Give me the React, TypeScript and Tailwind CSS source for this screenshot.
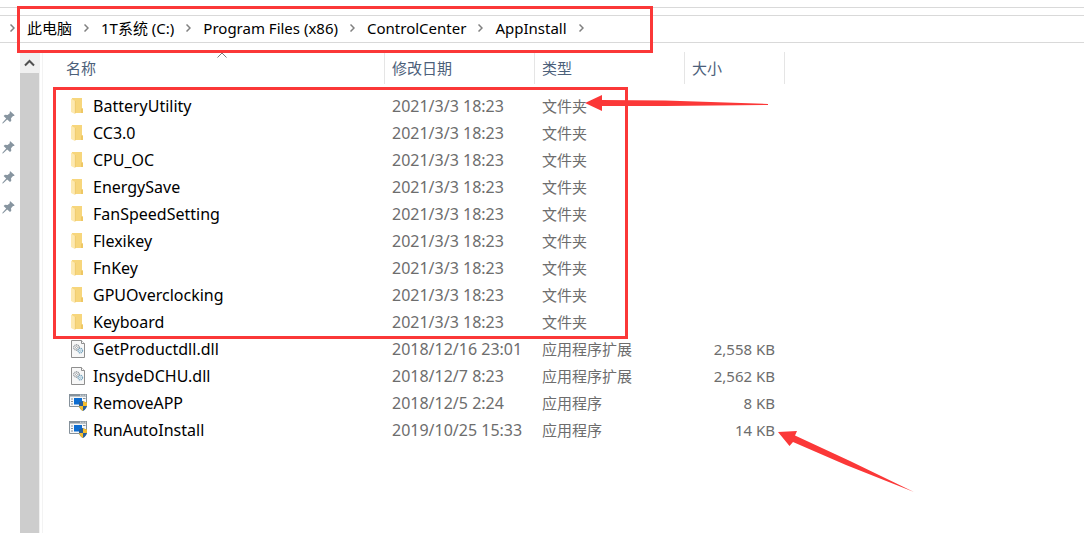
import React from 'react';

type Kind = 'folder' | 'dll' | 'app';

interface Entry {
  name: string;
  date: string;
  kind: Kind;
  size?: string;
}

const crumbs = ['此电脑', '1T系统 (C:)', 'Program Files (x86)', 'ControlCenter', 'AppInstall'];

const typeLabels: Record<Kind, string> = {
  folder: '文件夹',
  dll: '应用程序扩展',
  app: '应用程序',
};

const entries: Entry[] = [
  { name: 'BatteryUtility', date: '2021/3/3 18:23', kind: 'folder' },
  { name: 'CC3.0', date: '2021/3/3 18:23', kind: 'folder' },
  { name: 'CPU_OC', date: '2021/3/3 18:23', kind: 'folder' },
  { name: 'EnergySave', date: '2021/3/3 18:23', kind: 'folder' },
  { name: 'FanSpeedSetting', date: '2021/3/3 18:23', kind: 'folder' },
  { name: 'Flexikey', date: '2021/3/3 18:23', kind: 'folder' },
  { name: 'FnKey', date: '2021/3/3 18:23', kind: 'folder' },
  { name: 'GPUOverclocking', date: '2021/3/3 18:23', kind: 'folder' },
  { name: 'Keyboard', date: '2021/3/3 18:23', kind: 'folder' },
  { name: 'GetProductdll.dll', date: '2018/12/16 23:01', kind: 'dll', size: '2,558 KB' },
  { name: 'InsydeDCHU.dll', date: '2018/12/7 8:23', kind: 'dll', size: '2,562 KB' },
  { name: 'RemoveAPP', date: '2018/12/5 2:24', kind: 'app', size: '8 KB' },
  { name: 'RunAutoInstall', date: '2019/10/25 15:33', kind: 'app', size: '14 KB' },
];

const pins = [1, 2, 3, 4];

const FolderIcon: React.FC = () => (
  <svg width="14" height="16" viewBox="0 0 14 16" aria-hidden="true">
    <path d="M1 0h10v10.500h1V15H4L1 14z" fill="#f7d67c" />
    <path d="M10 10.500h2V15h-2z" fill="#eec764" />
    <path d="M0 0.500L4 3V16L0 14z" fill="#fde9b0" />
    <path d="M4.300 3V15.500" stroke="#e8c468" strokeWidth="0.6" />
  </svg>
);

const DllIcon: React.FC = () => (
  <svg width="14" height="18" viewBox="0 0 14 18" aria-hidden="true">
    <path d="M0.5 0.5h10l3 3v14h-13z" fill="#f7f7f7" stroke="#8f8f8f" />
    <path d="M10.5 0.5v3h3" fill="#fff" stroke="#8f8f8f" />
    <circle cx="5.5" cy="7.5" r="2.7" fill="#fff" stroke="#858b91" strokeWidth="1.2" strokeDasharray="1.2 0.5" />
    <circle cx="5.5" cy="7.5" r="1" fill="none" stroke="#858b91" strokeWidth="0.7" />
    <circle cx="9.3" cy="10.6" r="2.3" fill="#f4fafd" stroke="#79a5be" strokeWidth="1.2" strokeDasharray="1.2 0.5" />
    <circle cx="9.3" cy="10.6" r="0.8" fill="none" stroke="#79a5be" strokeWidth="0.6" />
  </svg>
);

const AppIcon: React.FC = () => (
  <svg width="18" height="17" viewBox="0 0 18 17" aria-hidden="true">
    <path d="M0.5 0.5h17v12h-17z" fill="#f6f7f8" stroke="#85919b" />
    <path d="M0 0h18v2.5H0z" fill="#85919b" />
    <path d="M11 1.200h1.500M13.300 1.200h1.500M15.600 1.200h1.500" stroke="#fff" strokeWidth="0.8" />
    <path d="M2 5h2M2 7.500h2M2 10h2M14 4.500h2.500" stroke="#85919b" />
    <path d="M5 4h8v6.500H5z" fill="#0c6cd0" />
    <path d="M14 7c-1.200 1-2.600 1.300-4 1.300V11c0 2.800 1.600 4.700 4 6 2.400-1.300 4-3.200 4-6V8.300c-1.400 0-2.800-.3-4-1.300z" fill="#2a5e97" />
    <path d="M14 7v5h-3.900c-.1-.3-.1-.7-.1-1V8.300c1.400 0 2.800-.3 4-1.300z" fill="#2a5e97" />
    <path d="M14 7c1.200 1 2.600 1.300 4 1.300V11l-.1 1H14z" fill="#f5bd2d" />
    <path d="M14 17c-2.300-1.300-3.600-2.900-3.900-5H14z" fill="#f5bd2d" />
  </svg>
);

const PinIcon: React.FC = () => (
  <svg width="13" height="13" viewBox="0 0 13 13" aria-hidden="true">
    <path
      d="M8.300 0.300L12.700 4.300L11.800 5.100L11 4.900L9 7.300L9.300 9.800L8 11.100L5.200 8.600L1.200 12.200L0.200 12.600L0.600 11.600L4.200 7.600L1.600 5L3 3.800L5.600 4L8 2.100L7.500 1.100Z"
      fill="#8795a0"
    />
  </svg>
);

const Chevron: React.FC = () => (
  <svg width="5" height="8" viewBox="0 0 5 8" className="shrink-0" aria-hidden="true">
    <path d="M0.500 0.500L4 4L0.500 7.500" fill="none" stroke="#808080" strokeWidth="1.500" />
  </svg>
);

const icons: Record<Kind, React.FC> = { folder: FolderIcon, dll: DllIcon, app: AppIcon };

const AddressBar: React.FC = () => (
  <header className="pt-[7px]">
    <div className="h-[9px] border-y border-[#d9d9d9]"></div>
    <nav aria-label="路径" className="flex h-[27px] items-center gap-3 border-b border-[#d9d9d9] pb-[2px] pl-[10px] text-black">
      <Chevron />
      {crumbs.map((crumb) => (
        <React.Fragment key={crumb}>
          <a href="#" className="whitespace-nowrap">
            {crumb}
          </a>
          <Chevron />
        </React.Fragment>
      ))}
    </nav>
  </header>
);

const Sidebar: React.FC = () => (
  <aside className="flex shrink-0">
    <div className="flex w-5 flex-col pt-[50px] pl-[2px]">
      {pins.map((pin) => (
        <button key={pin} type="button" aria-label="取消固定" className="flex h-[30px] items-center">
          <PinIcon />
        </button>
      ))}
    </div>
    {/* Scrollbar */}
    <div className="flex w-5 flex-col bg-[#f0f0f0]">
      <button type="button" aria-label="向上滚动" className="flex h-[21px] items-center justify-center">
        <svg width="12" height="8" viewBox="0 0 12 8" aria-hidden="true">
          <path d="M1 6.500L5.500 2L10 6.500" fill="none" stroke="#505050" strokeWidth="2" />
        </svg>
      </button>
      <div className="mr-px flex-1 bg-[#cdcdcd]"></div>
    </div>
  </aside>
);

const FileTable: React.FC = () => (
  <table className="w-full table-fixed border-separate border-spacing-0 text-left text-[#6d6d6d]">
    <colgroup>
      <col className="w-[342px]" />
      <col className="w-[150px]" />
      <col className="w-[150px]" />
      <col className="w-[100px]" />
      <col />
    </colgroup>
    <thead className="text-[#4c607a]">
      <tr>
        <th className="p-0 pb-2 font-normal">
          <div className="relative flex h-8 items-center border-r border-[#e5e5e5] pl-[23px]">
            名称
            <svg width="10" height="6" viewBox="0 0 10 6" className="absolute top-0 left-1/2 ml-[3px]" aria-hidden="true">
              <path d="M0.500 5.500L5 1L9.500 5.500" fill="none" stroke="#7a7a7a" />
            </svg>
          </div>
        </th>
        {['修改日期', '类型', '大小'].map((label) => (
          <th key={label} className="p-0 pb-2 font-normal">
            <div className="flex h-8 items-center border-r border-[#e5e5e5] pl-[7px]">{label}</div>
          </th>
        ))}
        <td></td>
      </tr>
    </thead>
    <tbody>
      {entries.map((entry) => {
        const Icon = icons[entry.kind];
        return (
          <tr key={entry.name} className="h-[27px]">
            <td className="p-0 pl-[26px] text-base/5 text-black">
              <div className="flex items-center gap-[6px]">
                <span className="flex w-[18px] justify-center">
                  <Icon />
                </span>
                {entry.name}
              </div>
            </td>
            <td className="p-0 pl-[7px] text-base/5 whitespace-nowrap">{entry.date}</td>
            <td className="p-0 pl-[7px] whitespace-nowrap">{typeLabels[entry.kind]}</td>
            <td className="p-0 pr-[10px] text-right whitespace-nowrap">{entry.size}</td>
            <td></td>
          </tr>
        );
      })}
    </tbody>
  </table>
);

// Red marks drawn over the window
const Annotations: React.FC = () => (
  <div className="pointer-events-none absolute inset-0">
    <div className="absolute top-[6px] left-[17px] h-[47px] w-[636px] border-3 border-[#fb3838]"></div>
    <div className="absolute top-[87px] left-[53px] h-[252px] w-[575px] border-3 border-[#fb3838]"></div>
    <svg width="184" height="18" viewBox="0 0 184 18" className="absolute top-[94px] left-[585px]" aria-hidden="true">
      <path d="M0 9L17 1V6L80 6.500L183 10V11L80 12L17 12V17Z" fill="#fb3838" />
    </svg>
    <svg width="137" height="63" viewBox="0 0 137 63" className="absolute top-[430px] left-[778px]" aria-hidden="true">
      <path d="M0 2L19 1L17 5.500L72 31L136 62L68 35L15 12L11.500 16Z" fill="#fb3838" />
    </svg>
  </div>
);

const App: React.FC = () => {
  return (
    <div className="relative flex min-h-screen flex-col overflow-hidden bg-white font-['Noto_Sans','Noto_Sans_CJK_SC',sans-serif] text-[15px] leading-5">
      <AddressBar />
      <div className="flex flex-1 pt-[9px]">
        <Sidebar />
        <main className="ml-[2px] min-w-0 flex-1 border-l border-[#f3f3f3]">
          <FileTable />
        </main>
      </div>
      <Annotations />
    </div>
  );
};

export default App;
